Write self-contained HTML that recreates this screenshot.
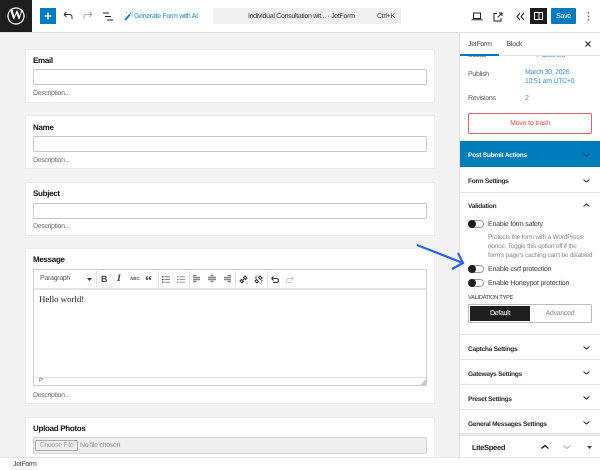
<!DOCTYPE html>
<html><head><meta charset="utf-8">
<style>
html,body{margin:0;padding:0;width:600px;height:470px;overflow:hidden;background:#f3f3f3}
#r{position:relative;width:600px;height:470px;overflow:hidden;background:#f3f3f3;font-family:"Liberation Sans",sans-serif;color:#1e1e1e;text-rendering:geometricPrecision}
.a{position:absolute;white-space:nowrap}
.t{position:absolute;white-space:nowrap;font-size:7px;line-height:10px;letter-spacing:-.3px;margin-top:1px}
.card{position:absolute;left:25px;width:410px;background:#fff;border:1px solid #ebebeb;box-sizing:border-box}
.inp{position:absolute;left:33px;width:394px;height:16px;background:#fff;border:1px solid #c9c9c9;border-radius:2px;box-sizing:border-box}
.lab{position:absolute;left:33px;font-size:8px;letter-spacing:-.3px;line-height:11px;font-weight:bold;color:#111;white-space:nowrap}
.desc{position:absolute;left:33px;font-size:7px;letter-spacing:-.3px;line-height:10px;color:#6f6f6f;white-space:nowrap;margin-top:1.500px}
.sec{position:absolute;left:460px;width:140px;background:#fff;border-bottom:1px solid #e4e4e4;box-sizing:border-box}
.sect{position:absolute;left:468px;font-size:6.600px;letter-spacing:-.28px;line-height:10px;font-weight:bold;color:#2c2c2c;white-space:nowrap;margin-top:1.500px}
svg{position:absolute;overflow:visible}
.tg{position:absolute;left:468px;width:16px;height:8px;border:1px solid #999;border-radius:5px;box-sizing:border-box;background:#fff}
.tg:before{content:"";position:absolute;left:-1px;top:-1px;width:8px;height:8px;border-radius:50%;background:#1e1e1e}
.sep{position:absolute;top:271px;width:1px;height:16px;background:#e2e2e2}
.tl{letter-spacing:-.2px;color:#3a3a3a}
</style></head><body><div id="r">

<!-- header -->
<div class="a" style="left:0;top:0;width:600px;height:33px;background:#fff;border-bottom:1px solid #e0e0e0;box-sizing:border-box"></div>
<div class="a" style="left:0;top:0;width:32px;height:32px;background:#1e1e1e"></div>
<svg style="left:7px;top:7px" width="18" height="18" viewBox="0 0 18 18"><circle cx="9" cy="9" r="8" fill="none" stroke="#fff" stroke-width="1.200"/></svg>
<div class="a" style="left:7px;top:7px;width:18px;height:18px;line-height:18px;text-align:center;font-family:'Liberation Serif',serif;font-weight:bold;font-size:14px;letter-spacing:-.5px;color:#fff">W</div>
<div class="a" style="left:40px;top:8px;width:16px;height:16px;background:#007cba"></div>
<svg style="left:40px;top:8px" width="16" height="16"><path d="M8 4.500v7M4.500 8h7" stroke="#fff" stroke-width="1.300"/></svg>
<svg style="left:63px;top:11px" width="10" height="10"><path d="M1 3.500h5.500c1.500 0 2.500 1 2.500 2.500v2M1 3.500 3.500 1M1 3.500 3.500 6" fill="none" stroke="#333" stroke-width="1"/></svg>
<svg style="left:83px;top:11px" width="10" height="10"><path d="M9 3.500H3.500C2 3.500 1 4.500 1 6v2M9 3.500 6.500 1M9 3.500 6.500 6" fill="none" stroke="#aaa" stroke-width="1"/></svg>
<svg style="left:103px;top:12px" width="10" height="9"><path d="M0 1h6M2 4.500h6M4 8h6" stroke="#222" stroke-width="1.100"/></svg>
<svg style="left:124px;top:11px" width="9" height="10"><path d="M1 9 6 3.500" stroke="#007cba" stroke-width="1.800"/><path d="M6.500 1.500v1.500M7.500 2h1.500M8 4.500v1M2.500 1.500v1" stroke="#007cba" stroke-width=".8"/></svg>
<div class="t" style="left:134px;top:11px;color:#1a81bd">Generate Form with AI</div>
<div class="a" style="left:213px;top:8px;width:188px;height:16px;background:#f0f0f0;border-radius:2px"></div>
<div class="t" style="left:248px;top:10.500px;color:#333">Individual Consultation wit... · JetForm</div>
<div class="t" style="left:377px;top:10.500px;color:#444">Ctrl+K</div>
<svg style="left:471px;top:12px" width="12" height="9"><path d="M2.500 1h7v5.500h-7zM0.500 7.800h11" fill="none" stroke="#222" stroke-width="1"/></svg>
<svg style="left:493px;top:12px" width="10" height="10"><path d="M4 1.500H1v7.500h7V6M4.500 5.500 9 1M6 1h3v3" fill="none" stroke="#222" stroke-width="1"/></svg>
<svg style="left:516px;top:12px" width="9" height="9"><path d="M4 1 1 4.500 4 8M8 1 5 4.500 8 8" fill="none" stroke="#222" stroke-width="1"/></svg>
<div class="a" style="left:530px;top:8px;width:17px;height:16px;background:#1e1e1e"></div>
<svg style="left:534px;top:12px" width="9" height="8"><path d="M.500.500h8v7h-8zM5 .5v7" fill="none" stroke="#fff" stroke-width="1"/></svg>
<div class="a" style="left:551px;top:8px;width:25px;height:16px;background:#007cba;border-radius:1px"></div>
<div class="t" style="left:551px;top:11px;width:25px;text-align:center;color:#fff">Save</div>
<svg style="left:587px;top:12px" width="3" height="9"><path d="M1.500 0v1.800M1.500 3.500v1.800M1.500 7v1.800" stroke="#777" stroke-width="1.500"/></svg>

<!-- cards -->
<div class="card" style="top:49px;height:54px"></div>
<div class="lab" style="top:55px">Email</div>
<div class="inp" style="top:69px"></div>
<div class="desc" style="top:87px">Description...</div>

<div class="card" style="top:115px;height:54px"></div>
<div class="lab" style="top:122px">Name</div>
<div class="inp" style="top:136px"></div>
<div class="desc" style="top:154px">Description...</div>

<div class="card" style="top:182px;height:54px"></div>
<div class="lab" style="top:188px">Subject</div>
<div class="inp" style="top:203px"></div>
<div class="desc" style="top:220px">Description...</div>

<div class="card" style="top:248px;height:156px"></div>
<div class="lab" style="top:254px">Message</div>
<div class="a" style="left:33px;top:269px;width:394px;height:117px;border:1px solid #ccc;box-sizing:border-box;background:#fff"></div>
<div class="a" style="left:34px;top:288px;width:392px;height:2px;background:#e4e4e4"></div>
<div class="t" style="left:40px;top:273px;color:#555">Paragraph</div>
<svg style="left:87px;top:278px" width="5" height="3"><path d="M0 0h5L2.500 3z" fill="#333"/></svg>
<div class="sep" style="left:96px"></div>
<div class="t" style="left:101px;top:273px;font-weight:bold;font-size:9px;letter-spacing:0;color:#444">B</div>
<div class="t" style="left:117px;top:273px;font-style:italic;font-weight:bold;font-family:'Liberation Serif',serif;font-size:10px;letter-spacing:0;color:#444">I</div>
<div class="t" style="left:130px;top:273px;font-size:4.500px;letter-spacing:0;font-weight:bold;color:#555">ABC</div>
<div class="t" style="left:145px;top:274px;font-size:14px;line-height:14px;letter-spacing:0;font-weight:bold;font-family:'Liberation Serif',serif;color:#444">“</div>
<div class="sep" style="left:158px"></div>
<svg style="left:162px;top:275.500px" width="8" height="7"><path d="M2.500 .800H8M2.500 3.500H8M2.500 6.200H8" stroke="#888" stroke-width="1"/><path d="M0 .800h1.500M0 3.500h1.500M0 6.200h1.500" stroke="#333" stroke-width="1.200"/></svg>
<svg style="left:177px;top:275.500px" width="8" height="7"><path d="M2.500 .800H8M2.500 3.500H8M2.500 6.200H8" stroke="#999" stroke-width="1"/><path d="M0 .800h1.500M0 3.500h1.500M0 6.200h1.500" stroke="#777" stroke-width="1"/></svg>
<div class="sep" style="left:189px"></div>
<svg style="left:193px;top:275px" width="8" height="8"><path d="M0 .500h3.500M0 2.500h7M0 4.500h7M0 6.500h3.500" stroke="#888" stroke-width="1.600"/></svg>
<svg style="left:208px;top:275px" width="8" height="8"><path d="M2.500 .500h3M0 2.500h8M0 4.500h8M2.500 6.500h3" stroke="#888" stroke-width="1.600"/></svg>
<svg style="left:223px;top:275px" width="8" height="8"><path d="M4.500 .500H8M1 2.500h7M1 4.500h7M4.500 6.500H8" stroke="#888" stroke-width="1.600"/></svg>
<div class="sep" style="left:235px"></div>
<svg style="left:239px;top:275px" width="9" height="9"><path d="M3 6 6 3M1 6 3 8 4.500 6.500 2.500 4.500zM4.500 2.500 6.500 4.500 8 3 6 1z" fill="none" stroke="#333" stroke-width="1"/></svg>
<svg style="left:254px;top:275px" width="9" height="9"><path d="M1 6 3 8 4.500 6.500 2.500 4.500zM4.500 2.500 6.500 4.500 8 3 6 1z" fill="none" stroke="#333" stroke-width="1"/><path d="M1 1.500 2 2.500M7 6.500 8 7.500M6 7v2M7 5.500h2M1 3h2M3 0v2" stroke="#666" stroke-width=".7"/></svg>
<div class="sep" style="left:267px"></div>
<svg style="left:271px;top:275px" width="8" height="8"><path d="M.500 3.500h5c1.300 0 2 .8 2 2s-.7 2-2 2H2M.500 3.500 2.500 1.500M.500 3.500 2.500 5.500" fill="none" stroke="#333" stroke-width="1"/></svg>
<svg style="left:286px;top:275px" width="8" height="8"><path d="M7.500 3.500h-5c-1.300 0-2 .8-2 2s.7 2 2 2H6M7.500 3.500 5.500 1.500M7.500 3.500 5.500 5.500" fill="none" stroke="#ccc" stroke-width="1"/></svg>
<div class="a" style="left:39px;top:293px;font-family:'Liberation Serif',serif;font-size:8.800px;line-height:12px;color:#222">Hello world!</div>
<div class="a" style="left:34px;top:377px;width:392px;height:1px;background:#e2e2e2"></div>
<div class="t" style="left:39px;top:375px;font-size:6px;color:#555">P</div>
<svg style="left:420px;top:379px" width="6" height="6"><path d="M6 0v6H0z" fill="#ccc"/></svg>
<div class="desc" style="top:389px">Description...</div>

<div class="card" style="top:417px;height:60px"></div>
<div class="lab" style="top:423px">Upload Photos</div>
<div class="a" style="left:33px;top:437px;width:394px;height:17px;background:#efefef;border:1px solid #d6d6d6;border-radius:2px;box-sizing:border-box"></div>
<div class="a" style="left:35px;top:440px;width:43px;height:11px;border:1px solid #aaa;border-radius:1px;box-sizing:border-box;background:#efefef;font-size:7px;letter-spacing:-.3px;line-height:9px;text-align:center;color:#aaa">Choose File</div>
<div class="t" style="left:80px;top:440px;color:#999">No file chosen</div>

<!-- sidebar -->
<div class="a" style="left:459px;top:33px;width:141px;height:424px;background:#fff;border-left:1px solid #e0e0e0;box-sizing:border-box"></div>
<div class="t" style="left:468px;top:68.500px;color:#555">Publish</div>
<div class="t" style="left:525px;top:68px;color:#3a8fc4;line-height:8.500px">March 30, 2026<br>10:51 am UTC+0</div>
<div class="t" style="left:468px;top:93px;color:#555">Revisions</div>
<div class="t" style="left:525px;top:93px;color:#3a8fc4">2</div>
<div class="t" style="left:468px;top:50px;color:#555">Status</div>
<svg style="left:525px;top:52px" width="8" height="4"><path d="M.5 0a3.500 3.500 0 0 0 7 0" fill="none" stroke="#3a8fc4" stroke-width="1"/></svg>
<div class="t" style="left:537px;top:50px;color:#3a8fc4">Published</div>
<div class="a" style="left:460px;top:33px;width:140px;height:23px;background:#fff;border-bottom:1px solid #e0e0e0;box-sizing:border-box"></div>
<div class="a" style="left:460px;top:54px;width:39px;height:2px;background:#007cba"></div>
<div class="t" style="left:468px;top:39px;color:#444">JetForm</div>
<div class="t" style="left:506.500px;top:39px;color:#444">Block</div>
<svg style="left:585px;top:41px" width="6" height="6"><path d="M.5.500l5 5M5.500.500l-5 5" stroke="#222" stroke-width="1.100"/></svg>
<div class="a" style="left:468px;top:113px;width:124px;height:21px;border:1px solid #e0606a;border-radius:2px;box-sizing:border-box;background:#fff;text-align:center;font-size:7px;letter-spacing:-.2px;line-height:20px;color:#d94f55">Move to trash</div>

<div class="a" style="left:460px;top:141px;width:140px;height:26px;background:#007cba"></div>
<div class="sect" style="top:149.500px;color:#fff">Post Submit Actions</div>
<svg style="left:583px;top:153px" width="7" height="4"><path d="M.5.500 3.500 3 6.500.500" fill="none" stroke="#0a3d5c" stroke-width="1"/></svg>

<div class="sec" style="top:167px;height:26px"></div>
<div class="sect" style="top:175px">Form Settings</div>
<svg style="left:583px;top:179px" width="7" height="4"><path d="M.5.500 3.500 3 6.500.500" fill="none" stroke="#222" stroke-width="1"/></svg>

<div class="sect" style="top:200px">Validation</div>
<svg style="left:583px;top:203px" width="7" height="4"><path d="M.5 3.500 3.500 1 6.500 3.500" fill="none" stroke="#222" stroke-width="1"/></svg>

<div class="tg" style="top:220px"></div>
<div class="t tl" style="left:488px;top:219px">Enable form safety</div>
<div class="t" style="left:488px;top:232px;font-size:6.500px;letter-spacing:-.22px;line-height:9px;color:#888">Protects the form with a WordPress<br>nonce. Toggle this option off if the<br>form's page's caching can't be disabled</div>
<div class="tg" style="top:265px"></div>
<div class="t tl" style="left:488px;top:264px">Enable csrf protection</div>
<div class="tg" style="top:279px"></div>
<div class="t tl" style="left:488px;top:278px">Enable Honeypot protection</div>
<div class="t" style="left:468px;top:291.500px;font-size:5.800px;letter-spacing:-.35px;color:#444">VALIDATION TYPE</div>
<div class="a" style="left:468px;top:304px;width:124px;height:19px;border:1px solid #bbb;border-radius:1px;box-sizing:border-box;background:#fff"></div>
<div class="a" style="left:470px;top:306px;width:60px;height:15px;background:#1e1e1e"></div>
<div class="t" style="left:470px;top:308px;width:60px;text-align:center;color:#fff">Default</div>
<div class="t" style="left:530px;top:308px;width:60px;text-align:center;color:#888">Advanced</div>
<div class="a" style="left:460px;top:334px;width:140px;height:1px;background:#e4e4e4"></div>

<div class="sec" style="top:335px;height:25px"></div>
<div class="sect" style="top:343px">Captcha Settings</div>
<svg style="left:583px;top:346px" width="7" height="4"><path d="M.5.500 3.500 3 6.500.500" fill="none" stroke="#222" stroke-width="1"/></svg>
<div class="sec" style="top:360px;height:25px"></div>
<div class="sect" style="top:368px">Gateways Settings</div>
<svg style="left:583px;top:371px" width="7" height="4"><path d="M.5.500 3.500 3 6.500.500" fill="none" stroke="#222" stroke-width="1"/></svg>
<div class="sec" style="top:385px;height:25px"></div>
<div class="sect" style="top:393px">Preset Settings</div>
<svg style="left:583px;top:396px" width="7" height="4"><path d="M.5.500 3.500 3 6.500.500" fill="none" stroke="#222" stroke-width="1"/></svg>
<div class="sec" style="top:410px;height:24px"></div>
<div class="sect" style="top:418px">General Messages Settings</div>
<svg style="left:583px;top:421px" width="7" height="4"><path d="M.5.500 3.500 3 6.500.500" fill="none" stroke="#222" stroke-width="1"/></svg>
<div class="a" style="left:460px;top:434px;width:140px;height:2px;background:#e8e8e8"></div>
<div class="sect" style="left:472px;top:441px;font-size:7.500px;letter-spacing:-.3px;color:#222">LiteSpeed</div>
<svg style="left:541px;top:445px" width="8" height="4"><path d="M.5 3.500 4 .5 7.500 3.500" fill="none" stroke="#111" stroke-width="1.300"/></svg>
<svg style="left:563px;top:445px" width="8" height="4"><path d="M.5.500 4 3.500 7.500.500" fill="none" stroke="#aaa" stroke-width="1"/></svg>
<svg style="left:587px;top:446px" width="5" height="3"><path d="M0 0h5L2.500 3z" fill="#444"/></svg>

<!-- footer -->
<div class="a" style="left:0;top:457px;width:600px;height:13px;background:#fff;border-top:1px solid #e4e4e4;box-sizing:border-box"></div>
<div class="t" style="left:13px;top:459px;color:#333">JetForm</div>

<!-- arrow -->
<svg style="left:415px;top:244px" width="50" height="26"><path d="M2 1 48 19M43 9 48 19 37 25" fill="none" stroke="#2b63f0" stroke-width="2.200"/></svg>
</div></body></html>
